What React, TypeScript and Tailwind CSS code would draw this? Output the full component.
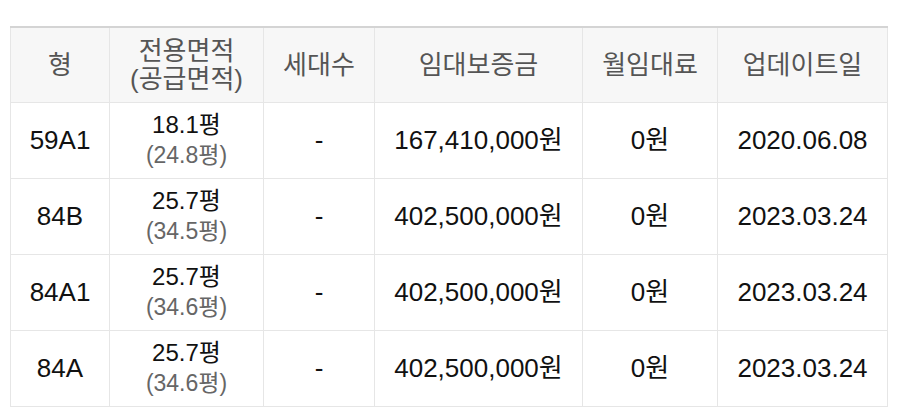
import React from 'react';

type Row = {
  type: string;
  area: string;
  supply: string;
  units: string;
  deposit: string;
  rent: string;
  updated: string;
};

const rows: Row[] = [
  { type: '59A1', area: '18.1평', supply: '(24.8평)', units: '-', deposit: '167,410,000원', rent: '0원', updated: '2020.06.08' },
  { type: '84B', area: '25.7평', supply: '(34.5평)', units: '-', deposit: '402,500,000원', rent: '0원', updated: '2023.03.24' },
  { type: '84A1', area: '25.7평', supply: '(34.6평)', units: '-', deposit: '402,500,000원', rent: '0원', updated: '2023.03.24' },
  { type: '84A', area: '25.7평', supply: '(34.6평)', units: '-', deposit: '402,500,000원', rent: '0원', updated: '2023.03.24' },
];

const th = 'border border-[#e6e6e6] bg-[#f7f7f7] font-normal text-[#555] align-middle text-center';
const td = 'border border-[#e6e6e6] align-middle text-center text-[#111]';

export default function App() {
  return (
    <div className="bg-white min-h-screen pt-[26px] pl-[10px] font-['Liberation_Sans','Noto_Sans_CJK_KR',sans-serif]">
      <table className="table-fixed border-collapse w-[877px] border-t-2 border-t-[#d4d4d4]">
        <colgroup>
          <col className="w-[99px]" />
          <col className="w-[154px]" />
          <col className="w-[111px]" />
          <col className="w-[208px]" />
          <col className="w-[135px]" />
          <col className="w-[170px]" />
        </colgroup>
        <thead>
          <tr className="h-[75px] text-[26px] leading-[28px]">
            <th className={th}>형</th>
            <th className={th}>
              전용면적
              <br />
              (공급면적)
            </th>
            <th className={th}>세대수</th>
            <th className={th}>임대보증금</th>
            <th className={th}>월임대료</th>
            <th className={th}>업데이트일</th>
          </tr>
        </thead>
        <tbody>
          {rows.map((r) => (
            <tr key={r.type} className="h-[76px] text-[26px] leading-[30px]">
              <td className={td}>{r.type}</td>
              <td className={td}>
                <div className="text-[24px] leading-[30px]">{r.area}</div>
                <div className="text-[23px] leading-[30px] text-[#666]">{r.supply}</div>
              </td>
              <td className={td}>{r.units}</td>
              <td className={td}>{r.deposit}</td>
              <td className={td}>{r.rent}</td>
              <td className={td}>{r.updated}</td>
            </tr>
          ))}
        </tbody>
      </table>
    </div>
  );
}
